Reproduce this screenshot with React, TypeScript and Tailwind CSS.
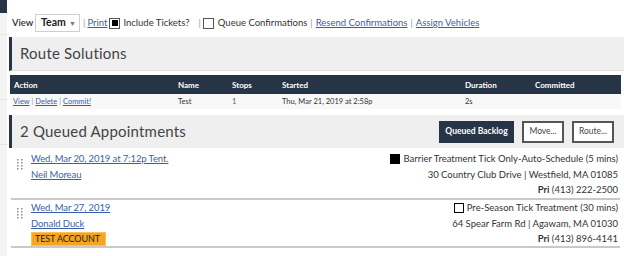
import React from "react";

const link = "text-[#3a5fa6] underline";

function Handle() {
  return (
    <svg width="7" height="13" viewBox="0 0 7 13" className="mt-[7px] shrink-0">
      {[0, 1, 2, 3].map((r) =>
        [0, 1].map((c) => (
          <rect key={`${r}-${c}`} x={1 + c * 4} y={1 + r * 3} width="1.5" height="1.5" fill="#8a8a8a" />
        ))
      )}
    </svg>
  );
}

function Appt(props: {
  date: string;
  name: string;
  badge?: boolean;
  filled: boolean;
  service: string;
  addr: string;
  phone: string;
  top: string;
  h: string;
}) {
  return (
    <div className={`flex ${props.h} ${props.top} pl-[5px] pr-[2px] border-b-2 border-[#c9c9c9] mr-[4px] ml-[2px]`}>
      <Handle />
      <div className="flex flex-col items-start pl-[8px] text-[9.5px] leading-[15.5px] tracking-[-0.1px] whitespace-nowrap">
        <a className={link}>{props.date}</a>
        <a className={link}>{props.name}</a>
        {props.badge && (
          <span className="mt-[1px] w-[75px] h-[14px] bg-[#f7a51f] border border-[#f9c060] text-[#222] text-[9px] leading-[12px] pl-[3px]">
            TEST ACCOUNT
          </span>
        )}
      </div>
      <div className="ml-auto flex flex-col items-end text-[9.5px] leading-[15.5px] text-[#333] whitespace-nowrap">
        <div className="flex items-center gap-[3px]">
          <span
            className={`inline-block w-[10px] h-[10px] ${props.filled ? "bg-black" : "border-[1.5px] border-black bg-white"}`}
          />
          <span>{props.service}</span>
        </div>
        <div>{props.addr}</div>
        <div>
          <span className="font-bold">Pri</span> {props.phone}
        </div>
      </div>
    </div>
  );
}

export default function App() {
  return (
    <div className="flex w-[624px] h-[256px] overflow-hidden bg-white font-['Lato',sans-serif] text-[#333]">
      <div className="w-[7px] shrink-0 flex flex-col bg-[#f4f4f4]">
        <div className="h-[13px] bg-[#263445]" />
        <div className="h-[22px] border-b border-[#e2e2e2]" />
        <div className="h-[65px] border-b border-[#e2e2e2]" />
        <div className="h-[45px] border-b border-[#e2e2e2]" />
      </div>
      <div className="flex-1 flex flex-col pl-[2px]">
        {/* Toolbar */}
        <div className="flex items-center h-[18px] mt-[14px] pl-[3px] text-[9.5px] text-[#333] whitespace-nowrap">
          <span className="font-semibold w-[20px]">View</span>
          <div className="ml-[3px] flex items-center h-[18px] w-[45px] border border-[#cfcfcf] pl-[5px] pr-[3px]">
            <span className="font-bold text-[10.5px] text-[#222]">Team</span>
            <span className="ml-auto text-[7px] text-[#777]">▼</span>
          </div>
          <span className="ml-[3px] text-[#999]">|</span>
          <a className={`${link} ml-[2px]`}>Print</a>
          <span className="ml-[2px] w-[11px] h-[11px] border border-[#555] flex items-center justify-center bg-white">
            <span className="w-[6px] h-[6px] bg-black" />
          </span>
          <span className="ml-[3px]">Include Tickets?</span>
          <span className="ml-[9px] text-[#999]">|</span>
          <span className="ml-[2px] w-[11px] h-[11px] border border-[#555] bg-white" />
          <span className="ml-[4px]">Queue Confirmations</span>
          <span className="mx-[3px] text-[#999]">|</span>
          <a className={link}>Resend Confirmations</a>
          <span className="mx-[3px] text-[#999]">|</span>
          <a className={link}>Assign Vehicles</a>
        </div>

        {/* Route Solutions */}
        <div className="mt-[5px] h-[34px] bg-[#efefef] border-l-[3px] border-[#263445] border-b border-b-[#e0e0e0] flex items-center pl-[8px]">
          <span className="text-[15px] text-[#444] tracking-[0.2px]">Route Solutions</span>
        </div>
        <div className="mt-[4px] ml-[1px] mr-[3px]">
          <div className="grid grid-cols-[164px_54px_50px_183px_70px_1fr] h-[19px] items-center bg-[#263445] text-white font-bold text-[8px] pl-[4px]">
            <span>Action</span>
            <span>Name</span>
            <span>Stops</span>
            <span>Started</span>
            <span>Duration</span>
            <span>Committed</span>
          </div>
          <div className="grid grid-cols-[164px_54px_50px_183px_70px_1fr] h-[15px] items-center bg-[#f8f8f8] pl-[3px] text-[7.5px]">
            <span>
              <a className={link}>View</a> <span className="text-[#999]">|</span> <a className={link}>Delete</a>{" "}
              <span className="text-[#999]">|</span> <a className={link}>Commit!</a>
            </span>
            <span className="pl-[1px]">Test</span>
            <span className="text-[#3a5fa6] pl-[1px]">1</span>
            <span className="pl-[1px]">Thu, Mar 21, 2019 at 2:58p</span>
            <span className="pl-[1px]">2s</span>
            <span />
          </div>
        </div>

        {/* Queued Appointments */}
        <div className="mt-[6px] h-[33px] bg-[#efefef] border-l-[3px] border-[#263445] flex items-center pl-[8px] pr-[10px]">
          <span className="text-[15px] text-[#444] tracking-[0.2px]">2 Queued Appointments</span>
          <div className="ml-auto flex items-center gap-[8px] text-[8.5px] font-bold">
            <button className="h-[22px] w-[75px] bg-[#263445] text-white">Queued Backlog</button>
            <button className="h-[22px] w-[42px] bg-white border-2 border-[#555] text-[#444] font-normal">Move...</button>
            <button className="h-[22px] w-[42px] bg-white border-2 border-[#555] text-[#444] font-normal">Route...</button>
          </div>
        </div>

        <Appt
          top="pt-[3px]"
          h="h-[52px]"
          date="Wed, Mar 20, 2019 at 7:12p Tent."
          name="Neil Moreau"
          filled={true}
          service="Barrier Treatment Tick Only-Auto-Schedule (5 mins)"
          addr="30 Country Club Drive | Westfield, MA 01085"
          phone="(413) 222-2500"
        />
        <Appt
          top="pt-[0px]"
          h="h-[48px]"
          date="Wed, Mar 27, 2019"
          name="Donald Duck"
          badge
          filled={false}
          service="Pre-Season Tick Treatment (30 mins)"
          addr="64 Spear Farm Rd | Agawam, MA 01030"
          phone="(413) 896-4141"
        />
      </div>
    </div>
  );
}
